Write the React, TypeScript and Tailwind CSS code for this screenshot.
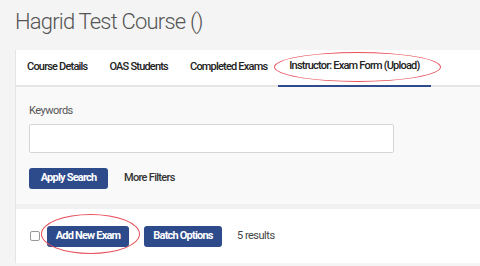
import React from "react";

export default function App() {
  const font = { fontFamily: "Roboto, 'Liberation Sans', sans-serif" };
  return (
    <div className="relative w-[480px] h-[266px] overflow-hidden bg-[#f4f4f4]" style={font}>
      <div className="pl-[15px] pt-[8px] h-[50px]">
        <h1 className="text-[22px] leading-[28px] font-light text-[#555] tracking-[-0.8px]">Hagrid Test Course ()</h1>
      </div>
      <div className="ml-[15px] w-[480px] border-l border-[#e4e4e4]">
        <div className="flex h-[37px] bg-white border-b-2 border-[#e6e6e6]">
          {["Course Details", "OAS Students", "Completed Exams"].map((t) => (
            <div key={t} className="shrink-0 whitespace-nowrap px-[11px] h-[35px] flex items-center text-[11px] font-medium text-[#222] tracking-[-0.8px]">
              {t}
            </div>
          ))}
          <div className="shrink-0 whitespace-nowrap px-[11px] h-[37px] flex items-center text-[11px] font-medium text-[#222] tracking-[-0.8px] border-b-2 border-[#2d4a8b]">
            <span className="-mt-[2px]">Instructor: Exam Form (Upload)</span>
          </div>
        </div>
        <div className="bg-[#f9f9f9] pt-[16px] pb-[15px] pl-[13px]">
          <div className="text-[11px] leading-[16px] text-[#555] tracking-[-0.5px]">Keywords</div>
          <div className="mt-[5px] w-[365px] h-[29px] bg-white border border-[#d6d6d6] rounded-[2px]" />
          <div className="mt-[15px] flex items-center">
            <button className="w-[79px] h-[21px] bg-[#2d4a8b] rounded-[3px] text-white text-[11px] font-bold tracking-[-0.8px] whitespace-nowrap">
              Apply Search
            </button>
            <span className="ml-[16px] text-[11px] font-medium text-[#333] tracking-[-0.7px] whitespace-nowrap">More Filters</span>
          </div>
        </div>
        <div className="h-[5px] bg-[#f1f1f1]" />
        <div className="bg-white h-[54px] flex items-center pl-[14px]">
          <div className="w-[10px] h-[10px] border border-[#999] rounded-[2px] bg-white" />
          <button className="ml-[7px] w-[82px] h-[21px] bg-[#2d4a8b] rounded-[3px] text-white text-[11px] font-bold tracking-[-0.8px] whitespace-nowrap">
            Add New Exam
          </button>
          <button className="ml-[15px] w-[78px] h-[21px] bg-[#2d4a8b] rounded-[3px] text-white text-[11px] font-bold tracking-[-0.8px] whitespace-nowrap">
            Batch Options
          </button>
          <span className="ml-[15px] text-[11px] text-[#444] tracking-[-0.5px] whitespace-nowrap">5 results</span>
        </div>
      </div>
      <div className="absolute left-[274px] top-[52px] w-[167px] h-[30px] rounded-[50%] border border-[#e8505b]" />
      <div className="absolute left-[41px] top-[214px] w-[99px] h-[40px] rounded-[50%] border border-[#e8505b]" />
    </div>
  );
}
